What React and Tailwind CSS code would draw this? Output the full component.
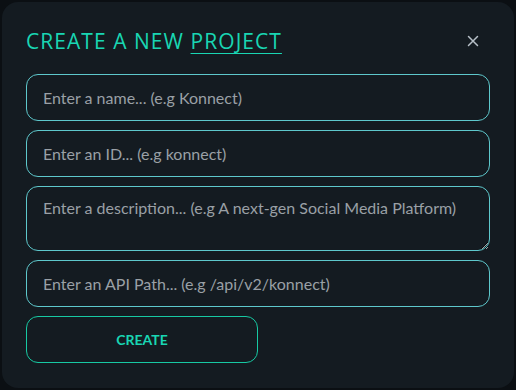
import React from "react";

const fieldClass =
  "w-full rounded-xl border border-[#5ec8cc] bg-transparent px-4 text-[16px] text-gray-200 placeholder:text-[#9aa0a6] outline-none";

const App = () => {
  return (
    <div className="h-[390px] w-[516px] bg-[#0b0f13] p-[2px]">
      <div
        className="flex h-full w-full flex-col rounded-2xl bg-[#141b21] px-[24px] pt-[25px]"
        style={{ fontFamily: "Lato, 'Noto Sans', sans-serif" }}
      >
        <div className="flex items-center justify-between">
          <h2
            className="text-[21px] leading-7 tracking-[0.05em] text-[#19d6b3]"
            style={{ fontFamily: "'Open Sans', sans-serif" }}
          >
            CREATE A NEW <span className="underline decoration-1 underline-offset-4">PROJECT</span>
          </h2>
          <button className="mr-[11px] text-[#b7c0c8]">
            <svg width="12" height="12" viewBox="0 0 12 12" fill="none" stroke="currentColor" strokeWidth="1.5" strokeLinecap="round">
              <path d="M1.5 1.5L10.5 10.5M10.5 1.5L1.5 10.5" />
            </svg>
          </button>
        </div>
        <div className="mt-[19px] flex flex-col gap-[9px]">
          <input className={`${fieldClass} h-[47px]`} placeholder="Enter a name... (e.g Konnect)" />
          <input className={`${fieldClass} h-[47px]`} placeholder="Enter an ID... (e.g konnect)" />
          <textarea
            className={`${fieldClass} h-[65px] resize-y py-[9px]`}
            placeholder="Enter a description... (e.g A next-gen Social Media Platform)"
          />
          <input className={`${fieldClass} h-[47px]`} placeholder="Enter an API Path... (e.g /api/v2/konnect)" />
          <button className="h-[47px] w-[232px] rounded-xl border border-[#17c9a3] text-[14px] font-bold text-[#19d6b3]">
            CREATE
          </button>
        </div>
      </div>
    </div>
  );
};

export default App;
